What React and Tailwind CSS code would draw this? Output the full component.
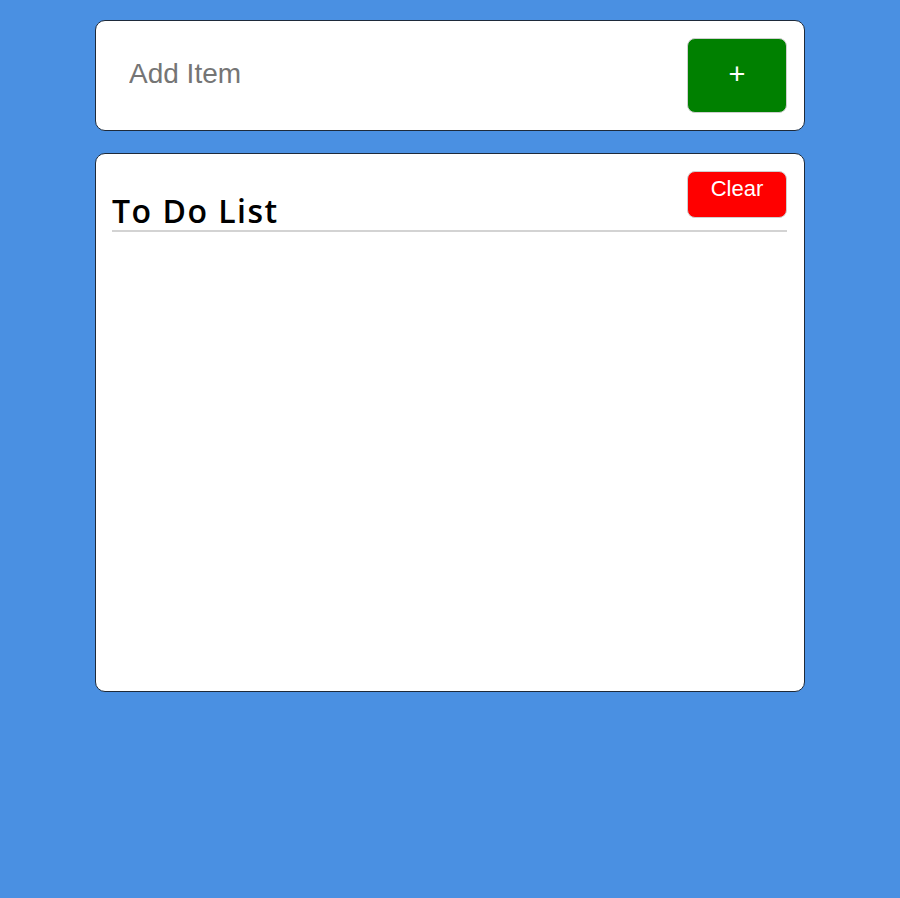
import React from 'react';

const App = () => {
  return (
    <div className="min-h-[898px] w-full bg-[#4a90e2] pt-5" style={{ fontFamily: '"Liberation Sans", Arial, sans-serif' }}>
      <div className="mx-auto flex w-[710px] flex-col gap-[22px]">
        <div className="flex h-[111px] items-center justify-between rounded-[10px] border border-[#1e2a3a] bg-white pl-[33px] pr-[17px]">
          <input
            type="text"
            placeholder="Add Item"
            className="mb-[3px] w-[500px] bg-transparent text-[28px] text-[#757575] outline-none placeholder:text-[#757575]"
          />
          <button className="flex h-[75px] w-[100px] items-center justify-center rounded-[8px] border border-[#cfcfcf] bg-[#008000] pb-[2px] text-[29px] text-white">
            +
          </button>
        </div>

        <div className="h-[539px] rounded-[10px] border border-[#1e2a3a] bg-white px-4 pr-[17px] pt-[17px]">
          <div className="flex items-start justify-between border-b-2 border-[#d3d3d3]">
            <h1 className="mt-[21px] text-[32px] font-semibold leading-[38px] tracking-[1.5px] text-black" style={{ fontFamily: '"Open Sans", "Lato", sans-serif' }}>
              To Do List
            </h1>
            <button className="h-[47px] w-[100px] rounded-[8px] border border-[#cfcfcf] bg-[#ff0000] pb-[12px] text-[22px] text-white">
              Clear
            </button>
          </div>
        </div>
      </div>
    </div>
  );
};

export default App;
